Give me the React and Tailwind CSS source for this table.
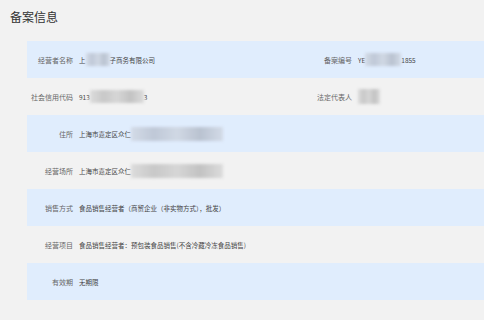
import React from "react";

const Blur = ({ w, h = "h-[13px]", tone = "blue" }) => (
  <span
    className={`inline-block align-middle ${h} blur-[1.5px] ${
      tone === "blue"
        ? "bg-[linear-gradient(90deg,#d3dbe7,#bfc8d7,#d0d8e4,#b9c2d0,#d3dbe7)]"
        : "bg-[linear-gradient(90deg,#dcdcdc,#c8c8c8,#d6d6d6,#c2c2c2,#dcdcdc)]"
    }`}
    style={{ width: w }}
  />
);

const Cell = ({ label, children, width }) => (
  <div className={`flex items-center ${width}`}>
    <div className="w-[46px] shrink-0 text-right text-[7px] text-[#666] whitespace-nowrap">{label}</div>
    <div className="ml-[6px] flex items-center text-[6.5px] text-[#444] whitespace-nowrap">{children}</div>
  </div>
);

const Row = ({ blue, children }) => (
  <div className={`flex items-center h-[37px] ${blue ? "bg-[#e0edfd]" : ""}`}>{children}</div>
);

export default function App() {
  return (
    <div
      className="w-[484px] h-[320px] bg-[#f2f2f2] overflow-hidden"
      style={{ fontFamily: '"Noto Sans CJK SC", "Liberation Sans", sans-serif' }}
    >
      <div className="h-[41px] pl-[10px] pt-[8px] text-[12px] leading-[17px] text-[#333]">备案信息</div>
      <div className="ml-[27px] leading-[10px]">
        <Row blue>
          <Cell label="经营者名称" width="w-[279px]">
            <span>上</span>
            <Blur w="24px" />
            <span>子商务有限公司</span>
          </Cell>
          <Cell label="备案编号">
            <span>YE</span>
            <Blur w="36px" />
            <span>1855</span>
          </Cell>
        </Row>
        <Row>
          <Cell label="社会信用代码" width="w-[279px]">
            <span>913</span>
            <Blur w="54px" tone="gray" />
            <span>3</span>
          </Cell>
          <Cell label="法定代表人">
            <Blur w="22px" h="h-[15px]" tone="gray" />
          </Cell>
        </Row>
        <Row blue>
          <Cell label="住所">
            <span>上海市嘉定区众仁</span>
            <Blur w="92px" h="h-[14px]" />
          </Cell>
        </Row>
        <Row>
          <Cell label="经营场所">
            <span>上海市嘉定区众仁</span>
            <Blur w="92px" h="h-[14px]" tone="gray" />
          </Cell>
        </Row>
        <Row blue>
          <Cell label="销售方式">
            <span>食品销售经营者（商贸企业（非实物方式），批发）</span>
          </Cell>
        </Row>
        <Row>
          <Cell label="经营项目">
            <span>食品销售经营者：预包装食品销售(不含冷藏冷冻食品销售)</span>
          </Cell>
        </Row>
        <Row blue>
          <Cell label="有效期">
            <span>无期限</span>
          </Cell>
        </Row>
      </div>
    </div>
  );
}
